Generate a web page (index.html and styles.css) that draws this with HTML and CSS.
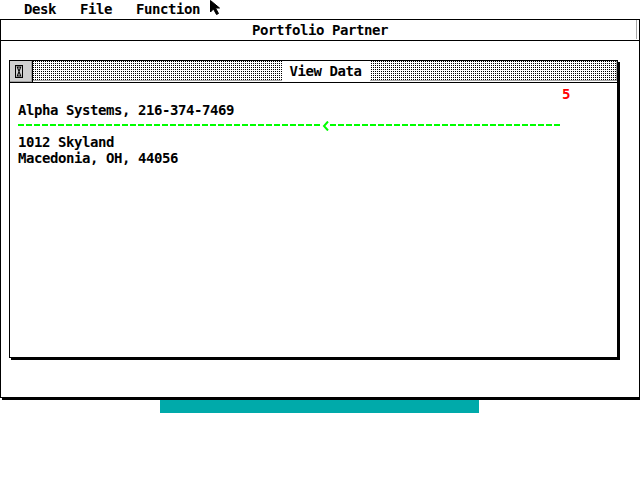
FILE: index.html
```html
<!DOCTYPE html>
<html>
<head>
<meta charset="utf-8">
<link rel="stylesheet" href="styles.css">
</head>
<body>
<div class="screen">
  <div class="menubar">
    <span class="menu-item">Desk</span>
    <span class="menu-item">File</span>
    <span class="menu-item">Function</span>
  </div>
  <svg class="pointer" width="11" height="16" viewBox="0 0 11 16"><polygon points="0.5,0.5 0.5,12 3.5,9 6.5,14.5 8.5,13.5 5.5,8 9.5,8" fill="#000" stroke="#000" stroke-width="1"/></svg>

  <div class="outer-window">
    <div class="outer-title">Portfolio Partner</div>
    <div class="outer-body">
      <div class="inner-window">
        <div class="inner-titlebar">
          <div class="closer">
            <svg width="8" height="13" viewBox="0 0 8 13"><rect x="0.5" y="0.5" width="7" height="12" fill="none" stroke="#000"/><polygon points="1.5,1.5 6.5,1.5 4.5,6.5 6.5,11.5 1.5,11.5 3.5,6.5" fill="#000"/><polygon points="3,2.5 5,2.5 4,5" fill="#c8c8c8"/><polygon points="3,10.5 5,10.5 4,8" fill="#c8c8c8"/></svg>
          </div>
          <div class="title-pattern">
            <span class="inner-title">View Data</span>
          </div>
        </div>
        <div class="inner-content">
          <div class="row counter-row"><span class="counter">5</span></div>
          <div class="row">Alpha Systems, 216-374-7469</div>
          <div class="row dash-row">
            <div class="dashes dashes-left"></div>
            <svg class="arrow" width="8" height="10" viewBox="0 0 8 10"><polyline points="6,0.5 2,5 6,9.5" fill="none" stroke="#00ff00" stroke-width="2"/></svg>
            <div class="dashes dashes-right"></div>
          </div>
          <div class="row">1012 Skyland</div>
          <div class="row">Macedonia, OH, 44056</div>
        </div>
      </div>
    </div>
  </div>
  <div class="teal-bar"></div>
</div>
</body>
</html>
```

FILE: styles.css
```css
html, body {
  margin: 0;
  padding: 0;
  background: #fff;
}

.screen {
  position: relative;
  width: 640px;
  height: 480px;
  overflow: hidden;
  font-family: "DejaVu Sans Mono", "Liberation Mono", monospace;
  font-size: 14px;
  letter-spacing: -0.43px;
  font-weight: bold;
  color: #000;
}

.menubar {
  display: flex;
  gap: 24px;
  height: 19px;
  line-height: 19px;
  padding-left: 24px;
  white-space: pre;
}

.pointer {
  position: absolute;
  left: 210px;
  top: 0;
}

.outer-window {
  box-sizing: border-box;
  width: 640px;
  height: 379px;
  border: 1px solid #000;
  box-shadow: 2px 2px 0 #000;
  background: #fff;
}

.outer-title {
  box-sizing: border-box;
  height: 21px;
  line-height: 20px;
  text-align: center;
  border-bottom: 1px solid #000;
  box-shadow: inset -2px -1px 0 #fff, inset -3px -1px 0 #a8a8a8;
  white-space: pre;
}

.outer-body {
  padding-top: 19px;
  padding-left: 8px;
}

.inner-window {
  box-sizing: border-box;
  width: 609px;
  height: 298px;
  border: 1px solid #000;
  box-shadow: 2px 2px 0 #000;
  display: flex;
  flex-direction: column;
}

.inner-titlebar {
  display: flex;
  height: 21px;
  border-bottom: 1px solid #000;
  flex: none;
}

.closer {
  box-sizing: border-box;
  width: 23px;
  background: #d0d0d0;
  border-right: 1px solid #000;
  display: flex;
  align-items: center;
  padding-left: 5px;
  box-shadow: inset -1px -1px 0 #a0a0a0;
}

.title-pattern {
  flex: 1;
  display: flex;
  justify-content: center;
  align-items: stretch;
  padding-left: 1px;
  background-color: #fff;
  background-image:
    linear-gradient(to right, transparent 1px, #fff 1px),
    linear-gradient(to bottom, #000 1px, #fff 1px);
  background-size: 2px 2px;
  box-shadow: inset -1px -1px 0 #a8a8a8;
  border-bottom: 1px solid #fff;
}

.inner-title {
  background: #fff;
  padding: 0 8px;
  line-height: 20px;
  white-space: pre;
}

.inner-content {
  flex: 1;
  padding: 5px 8px 0 8px;
}

.row {
  height: 16px;
  line-height: 16px;
  white-space: pre;
}

.counter-row {
  height: 14px;
  line-height: 12px;
  padding-left: 544px;
}

.counter {
  color: #ff0000;
}

.dash-row {
  display: flex;
  align-items: flex-start;
  padding-top: 3px;
  box-sizing: border-box;
}

.dashes {
  height: 2px;
  margin-top: 3px;
  background-image: linear-gradient(to right, #00ff00 6px, transparent 6px);
  background-size: 8px 2px;
}

.dashes-left {
  width: 304px;
}

.dashes-right {
  width: 231px;
}

.arrow {
  flex: none;
}

.teal-bar {
  margin-top: 2px;
  margin-left: 160px;
  width: 319px;
  height: 13px;
  background: #00aaaa;
}
```
